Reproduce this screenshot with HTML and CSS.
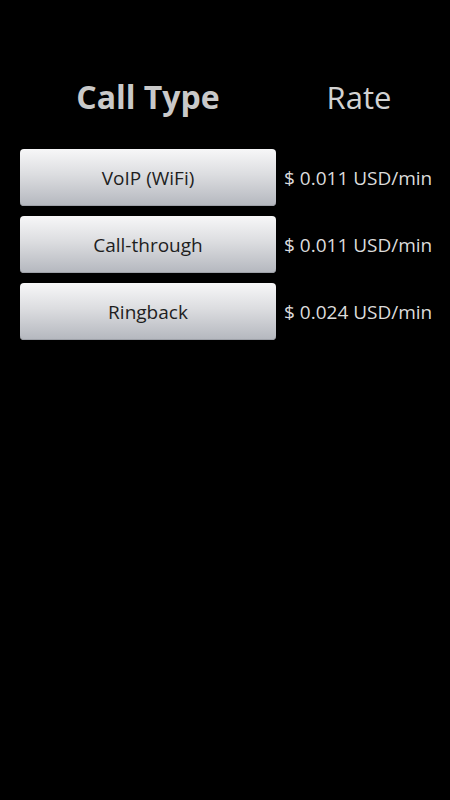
FILE: index.html
```html
<!DOCTYPE html>
<html lang="en">
<head>
  <meta charset="UTF-8">
  <meta name="viewport" content="width=device-width, initial-scale=1.0">
  <title>Rates</title>
  <link rel="stylesheet" href="styles.css">
</head>
<body>
  <main class="rates">
    <h2 class="head head-type">Call Type</h2>
    <h2 class="head head-rate">Rate</h2>

    <button class="type-btn">VoIP (WiFi)</button>
    <span class="price">$ 0.011 USD/min</span>

    <button class="type-btn">Call-through</button>
    <span class="price">$ 0.011 USD/min</span>

    <button class="type-btn">Ringback</button>
    <span class="price">$ 0.024 USD/min</span>
  </main>
</body>
</html>
```

FILE: styles.css
```css
html, body {
  background: #000;
}
body {
  margin: 0;
  font-family: "Open Sans", "DejaVu Sans", sans-serif;
}
.rates {
  display: grid;
  grid-template-columns: 256px 150px;
  column-gap: 8px;
  row-gap: 10px;
  padding: 75px 0 0 20px;
}
.head {
  margin: 0 0 20px;
  font-size: 32px;
  line-height: 44px;
  text-align: center;
  color: #c9c9c9;
}
.head-type {
  font-weight: 700;
}
.head-rate {
  font-weight: 400;
  font-size: 31px;
  color: #d2d2d2;
}
.type-btn {
  height: 57px;
  border: none;
  border-radius: 4px;
  background: linear-gradient(#f7f7f8, #dcdde0 45%, #b4b7be);
  box-shadow: inset 0 -1px 0 #9ea1a8;
  font-family: inherit;
  font-size: 19px;
  color: #1e1e1e;
}
.price {
  align-self: center;
  white-space: nowrap;
  font-size: 19px;
  color: #dcdcdc;
}
```
